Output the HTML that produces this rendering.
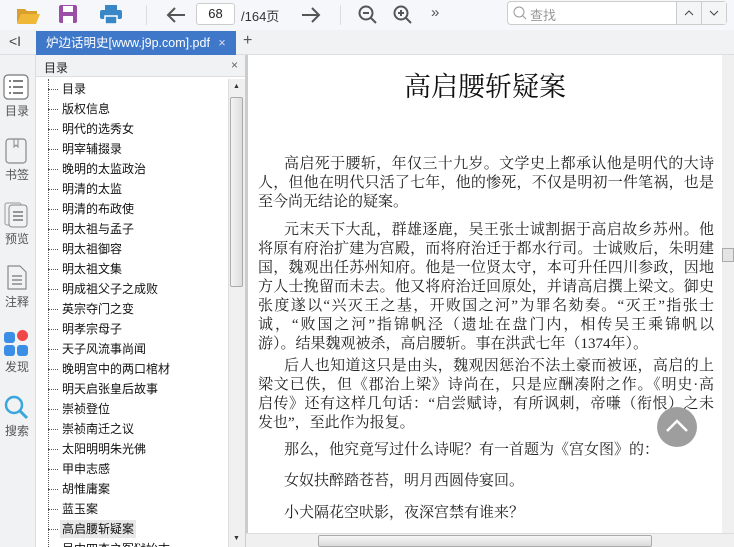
<!DOCTYPE html>
<html><head><meta charset="utf-8"><style>
*{margin:0;padding:0;box-sizing:border-box}
html,body{width:734px;height:547px;overflow:hidden}
body{background:#f3f4f6;font-family:"Liberation Sans","Noto Sans CJK SC",sans-serif;position:relative}
.abs{position:absolute}
#tb{left:0;top:0;width:734px;height:30px;background:#f5f7fa}
#tabs{left:0;top:30px;width:734px;height:25px;background:#f1f2f4;border-bottom:1px solid #dcdde0}
#rail{left:0;top:55px;width:36px;height:492px;background:#f1f2f4;border-right:1px solid #dcdde0}
.ri{position:absolute;left:0;width:34px;text-align:center;font-size:12px;color:#555}
#toc{left:36px;top:55px;width:210px;height:492px;background:#fff;border-right:1px solid #ccc;overflow:hidden}
#toch{left:0;top:0;width:210px;height:22px;background:#f1f2f4;border-bottom:1px solid #ddd;font-size:12px;color:#222;padding:4px 0 0 8px}
.it{position:absolute;left:24px;font-size:12px;color:#111;height:18px;line-height:18px;padding:0 2px}
.it:before{content:"";position:absolute;left:-12px;top:9px;width:10px;border-top:1px dotted #555}
#main{left:246px;top:55px;width:476px;height:478px;background:#fff;border-left:2px solid #ccc;overflow:hidden}
.ln{position:absolute;left:10px;width:456px;font-family:"Liberation Serif","Noto Serif CJK SC",serif;font-size:15px;line-height:19px;color:#222;text-align:justify;text-align-last:justify;white-space:nowrap}
.l{text-align-last:left}
</style></head><body>
<div id="tb" class="abs">
<svg class="abs" style="left:16px;top:6px" width="24" height="18"><path d="M1 3h8l2 2h10v3H6L1 17z" fill="#d9a030"/><path d="M5 8h19l-4 10H1z" fill="#f0b838"/></svg>
<svg class="abs" style="left:59px;top:5px" width="18" height="18"><rect x="0" y="0" width="18" height="18" rx="2" fill="#9a4ea8"/><rect x="4" y="1" width="10" height="6" fill="#fff"/><rect x="4" y="11" width="10" height="7" fill="#fff"/></svg>
<svg class="abs" style="left:100px;top:5px" width="22" height="19"><rect x="5" y="0" width="12" height="5" fill="#3a87c8"/><rect x="0" y="5" width="22" height="9" rx="2" fill="#3a87c8"/><rect x="5" y="11" width="12" height="8" fill="#3a87c8" stroke="#fff" stroke-width="1.5"/></svg>
<div class="abs" style="left:146px;top:5px;width:1px;height:20px;background:#ddd"></div>
<svg class="abs" style="left:166px;top:6px" width="20" height="18"><path d="M19 9H2M9 2L2 9l7 7" stroke="#555" stroke-width="2" fill="none"/></svg>
<div class="abs" style="left:196px;top:3px;width:39px;height:22px;border:1px solid #ccc;border-radius:3px;background:#fff;font-size:13px;text-align:center;line-height:20px;color:#222">68</div>
<div class="abs" style="left:241px;top:6px;font-size:13px;color:#333">/164页</div>
<svg class="abs" style="left:301px;top:6px" width="20" height="18"><path d="M1 9h17M11 2l7 7-7 7" stroke="#555" stroke-width="2" fill="none"/></svg>
<div class="abs" style="left:340px;top:5px;width:1px;height:20px;background:#ddd"></div>
<svg class="abs" style="left:358px;top:5px" width="20" height="20"><circle cx="8" cy="8" r="6.5" stroke="#555" stroke-width="2" fill="none"/><path d="M5 8h6M13 13l5 5" stroke="#555" stroke-width="2"/></svg>
<svg class="abs" style="left:393px;top:5px" width="20" height="20"><circle cx="8" cy="8" r="6.5" stroke="#555" stroke-width="2" fill="none"/><path d="M5 8h6M8 5v6M13 13l5 5" stroke="#555" stroke-width="2"/></svg>
<div class="abs" style="left:431px;top:4px;font-size:15px;color:#555">»</div>
<div class="abs" style="left:507px;top:1px;width:220px;height:24px;border:1px solid #ccc;border-radius:4px;background:#fff"></div>
<svg class="abs" style="left:513px;top:6px" width="14" height="14"><circle cx="6" cy="6" r="5" stroke="#999" fill="none"/><path d="M9.5 9.5l3.5 3.5" stroke="#999"/></svg>
<div class="abs" style="left:530px;top:5px;font-size:13px;color:#999">查找</div>
<div class="abs" style="left:676px;top:2px;width:50px;height:22px;background:#f4f5f7;border-left:1px solid #ccc"></div>
<div class="abs" style="left:701px;top:2px;width:1px;height:22px;background:#ccc"></div>
<svg class="abs" style="left:684px;top:9px" width="10" height="8"><path d="M1 6l4-4 4 4" stroke="#444" fill="none"/></svg>
<svg class="abs" style="left:709px;top:9px" width="10" height="8"><path d="M1 2l4 4 4-4" stroke="#444" fill="none"/></svg>
</div>
<div id="tabs" class="abs">
<div class="abs" style="left:9px;top:3px;font-size:14px;color:#444">&lt;I</div>
<div class="abs" style="left:36px;top:1px;width:200px;height:24px;background:#3f78c8;color:#fff;font-size:12.5px;line-height:24px;padding-left:10px">炉边话明史[www.j9p.com].pdf <span style="margin-left:5px;color:#dde">×</span></div>
<div class="abs" style="left:243px;top:2px;font-size:16px;color:#555">+</div>
</div>
<div id="rail" class="abs">
<svg class="abs" style="left:3px;top:19px" width="26" height="26"><rect x="1" y="1" width="24" height="24" rx="4" stroke="#777" fill="#fff" stroke-width="1.2"/><path d="M6 7h2M10 7h10M6 13h2M10 13h10M6 19h2M10 19h10" stroke="#555" stroke-width="1.5"/></svg>
<div class="ri" style="top:47px">目录</div>
<svg class="abs" style="left:5px;top:83px" width="22" height="26"><rect x="1" y="1" width="20" height="24" rx="3" stroke="#888" fill="none" stroke-width="1.2"/><path d="M9 1v8l2-2 2 2V1" stroke="#888" fill="none"/></svg>
<div class="ri" style="top:111px">书签</div>
<svg class="abs" style="left:4px;top:147px" width="24" height="26"><rect x="1" y="1" width="16" height="22" rx="2" stroke="#999" fill="none"/><rect x="5" y="3" width="18" height="22" rx="3" stroke="#888" fill="#f1f2f4"/><path d="M9 10h10M9 14h10M9 18h10" stroke="#777" stroke-width="1.5"/></svg>
<div class="ri" style="top:175px">预览</div>
<svg class="abs" style="left:6px;top:210px" width="22" height="26"><path d="M2 1h12l6 6v17H2z" stroke="#888" fill="none" stroke-width="1.2" stroke-linejoin="round"/><path d="M6 11h10M6 15h10M6 19h10" stroke="#777" stroke-width="1.3"/></svg>
<div class="ri" style="top:238px">注释</div>
<div class="abs" style="left:4px;top:277px;width:11px;height:11px;background:#3a8ee6;border-radius:3px"></div>
<div class="abs" style="left:17px;top:275px;width:11px;height:11px;background:#f04848;border-radius:50%"></div>
<div class="abs" style="left:4px;top:290px;width:11px;height:11px;background:#3a8ee6;border-radius:3px"></div>
<div class="abs" style="left:17px;top:290px;width:11px;height:11px;background:#3a8ee6;border-radius:3px"></div>
<div class="ri" style="top:303px">发现</div>
<svg class="abs" style="left:4px;top:340px" width="26" height="26"><circle cx="10" cy="10" r="8" stroke="#3aa6dc" stroke-width="2.5" fill="none"/><path d="M16 16l7 7" stroke="#3aa6dc" stroke-width="3"/></svg>
<div class="ri" style="top:367px">搜索</div>
</div>
<div id="toc" class="abs">
<div id="toch" class="abs">目录<span style="position:absolute;right:8px;top:3px;color:#666">×</span></div>
<div class="abs" style="left:12px;top:24px;height:468px;border-left:1px dotted #555"></div>
<div class="it" style="top:25px">目录</div>
<div class="it" style="top:45px">版权信息</div>
<div class="it" style="top:65px">明代的选秀女</div>
<div class="it" style="top:85px">明宰辅掇录</div>
<div class="it" style="top:105px">晚明的太监政治</div>
<div class="it" style="top:125px">明清的太监</div>
<div class="it" style="top:145px">明清的布政使</div>
<div class="it" style="top:165px">明太祖与孟子</div>
<div class="it" style="top:185px">明太祖御容</div>
<div class="it" style="top:205px">明太祖文集</div>
<div class="it" style="top:225px">明成祖父子之成败</div>
<div class="it" style="top:245px">英宗夺门之变</div>
<div class="it" style="top:265px">明孝宗母子</div>
<div class="it" style="top:285px">天子风流事尚闻</div>
<div class="it" style="top:305px">晚明宫中的两口棺材</div>
<div class="it" style="top:325px">明天启张皇后故事</div>
<div class="it" style="top:345px">崇祯登位</div>
<div class="it" style="top:365px">崇祯南迁之议</div>
<div class="it" style="top:385px">太阳明明朱光佛</div>
<div class="it" style="top:405px">甲申志感</div>
<div class="it" style="top:425px">胡惟庸案</div>
<div class="it" style="top:445px">蓝玉案</div>
<div class="it" style="top:465px;background:#e8e8e8">高启腰斩疑案</div>
<div class="it" style="top:485px">吴中四杰之冤狱始末</div>
<div class="abs" style="left:192px;top:24px;width:17px;height:468px;background:#f0f0f0;border-left:1px solid #ddd"></div>
<div class="abs" style="left:194px;top:42px;width:13px;height:190px;background:linear-gradient(90deg,#f4f4f4,#dcdcdc);border:1px solid #aaa;border-radius:2px"></div>
<div class="abs" style="left:197px;top:28px;font-size:7px;color:#333">▲</div>
<div class="abs" style="left:197px;top:480px;font-size:7px;color:#333">▼</div>
</div>
<div id="main" class="abs">
<div class="abs" style="left:0;top:10px;width:474px;text-align:center;font-family:'Liberation Serif','Noto Serif CJK SC',serif;font-size:27px;color:#111">高启腰斩疑案</div>
<div class="ln" style="top:100px;left:36px;width:430px">高启死于腰斩，年仅三十九岁。文学史上都承认他是明代的大诗</div>
<div class="ln" style="top:119px">人，但他在明代只活了七年，他的惨死，不仅是明初一件笔祸，也是</div>
<div class="ln l" style="top:138px">至今尚无结论的疑案。</div>
<div class="ln" style="top:166px;left:36px;width:430px">元末天下大乱，群雄逐鹿，吴王张士诚割据于高启故乡苏州。他</div>
<div class="ln" style="top:185px">将原有府治扩建为宫殿，而将府治迁于都水行司。士诚败后，朱明建</div>
<div class="ln" style="top:204px">国，魏观出任苏州知府。他是一位贤太守，本可升任四川参政，因地</div>
<div class="ln" style="top:223px">方人士挽留而未去。他又将府治迁回原处，并请高启撰上梁文。御史</div>
<div class="ln" style="top:242px">张度遂以“兴灭王之基，开败国之河”为罪名劾奏。“灭王”指张士</div>
<div class="ln" style="top:261px">诚，“败国之河”指锦帆泾（遗址在盘门内，相传吴王乘锦帆以</div>
<div class="ln l" style="top:280px">游）。结果魏观被杀，高启腰斩。事在洪武七年（1374年）。</div>
<div class="ln" style="top:302px;left:36px;width:430px">后人也知道这只是由头，魏观因惩治不法土豪而被诬，高启的上</div>
<div class="ln" style="top:321px">梁文已佚，但《郡治上梁》诗尚在，只是应酬凑附之作。《明史·高</div>
<div class="ln" style="top:340px">启传》还有这样几句话：“启尝赋诗，有所讽刺，帝嗛（衔恨）之未</div>
<div class="ln l" style="top:359px">发也”，至此作为报复。</div>
<div class="ln l" style="top:386px;left:36px">那么，他究竟写过什么诗呢？有一首题为《宫女图》的：</div>
<div class="ln l" style="top:417px;left:36px">女奴扶醉踏苍苔，明月西圆侍宴回。</div>
<div class="ln l" style="top:449px;left:36px">小犬隔花空吠影，夜深宫禁有谁来？</div>
<div class="abs" style="left:409px;top:352px;width:40px;height:40px;border-radius:50%;background:#9e9e9e"></div>
<svg class="abs" style="left:417px;top:362px" width="24" height="16"><path d="M2 14L12 4l10 10" stroke="#fff" stroke-width="2.5" fill="none"/></svg>
</div>
<div class="abs" style="left:722px;top:55px;width:12px;height:478px;background:#f0f0f0"></div>
<div class="abs" style="left:722px;top:248px;width:12px;height:14px;background:#e4e4e4;border:1px solid #aaa"></div>
<div class="abs" style="left:246px;top:533px;width:488px;height:14px;background:#f0f0f0;border-top:1px solid #ddd"></div>
<div class="abs" style="left:318px;top:535px;width:334px;height:12px;background:linear-gradient(#f6f6f6,#dadada);border:1px solid #aaa;border-radius:2px"></div>
</body></html>
